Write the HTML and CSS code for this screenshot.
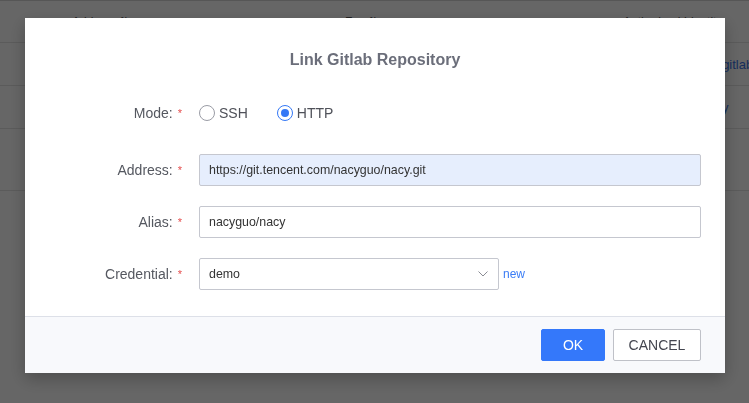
FILE: index.html
```html
<!DOCTYPE html>
<html>
<head>
<meta charset="utf-8">
<link rel="stylesheet" href="styles.css">
</head>
<body>
<div class="page">
  <div class="table">
    <div class="row head">
      <div class="c1">Address ⇅</div>
      <div class="c2">Fav ⇅</div>
      <div class="c3">Authorized Identity</div>
    </div>
    <div class="row">
      <div class="c1"></div>
      <div class="c2"></div>
      <div class="c3 link first">demo/gitlab</div>
    </div>
    <div class="row">
      <div class="c1"></div>
      <div class="c2"></div>
      <div class="c3 link second">nacy</div>
    </div>
    <div class="row tall">
      <div class="c1"></div>
      <div class="c2"></div>
      <div class="c3"></div>
    </div>
  </div>
</div>

<div class="overlay">
  <div class="modal">
    <div class="modal-title">Link Gitlab Repository</div>
    <div class="form">
      <div class="field mode">
        <div class="label">Mode:<span class="req">*</span></div>
        <div class="control radios">
          <label class="radio"><span class="circle"></span>SSH</label>
          <label class="radio"><span class="circle checked"></span>HTTP</label>
        </div>
      </div>
      <div class="field">
        <div class="label">Address:<span class="req">*</span></div>
        <div class="control"><div class="input filled">https://git.tencent.com/nacyguo/nacy.git</div></div>
      </div>
      <div class="field">
        <div class="label">Alias:<span class="req">*</span></div>
        <div class="control"><div class="input">nacyguo/nacy</div></div>
      </div>
      <div class="field">
        <div class="label">Credential:<span class="req">*</span></div>
        <div class="control select-wrap">
          <div class="input select">
            <span>demo</span>
            <svg class="chev" width="10" height="6" viewBox="0 0 10 6"><path d="M0.5 0.5 L5 5 L9.5 0.5" fill="none" stroke="#8a8c94" stroke-width="1"/></svg>
          </div>
          <a class="new">new</a>
        </div>
      </div>
    </div>
    <div class="footer">
      <button class="btn primary">OK</button>
      <button class="btn cancel">CANCEL</button>
    </div>
  </div>
</div>
</body>
</html>
```

FILE: styles.css
```css
* { box-sizing: border-box; }
html, body { margin: 0; padding: 0; }
body {
  font-family: "Liberation Sans", Arial, sans-serif;
  width: 749px;
  height: 403px;
  overflow: hidden;
  background: #fff;
}

.page { border-top: 1px solid #d6d6d6; }
.table { width: 749px; }
.row {
  display: grid;
  grid-template-columns: 345px 278px 126px;
  height: 43px;
  border-bottom: 1px solid #e4e4e4;
  align-items: center;
  font-size: 13px;
  color: #333;
  white-space: nowrap;
  overflow: hidden;
}
.row.head { height: 42px; font-size: 12px; color: #555; }
.row.tall { height: 62px; }
.row > div { overflow: hidden; }
.c1 { padding-left: 72px; }
.link { color: #3a74e8; }
.link.first { padding-left: 63px; }
.link.second { padding-left: 78px; }

.overlay {
  position: fixed;
  inset: 0;
  background: rgba(0, 0, 0, 0.6);
  padding: 18px 0 0 25px;
}

.modal {
  width: 700px;
  background: #fff;
  box-shadow: 0 6px 16px rgba(0, 0, 0, 0.25);
}

.modal-title {
  padding-top: 32px;
  font-size: 16px;
  line-height: 20px;
  font-weight: bold;
  color: #6b6e7a;
  text-align: center;
}

.form {
  padding-top: 27px;
  padding-bottom: 26px;
  display: flex;
  flex-direction: column;
  gap: 20px;
}
.field {
  display: flex;
  align-items: center;
  height: 32px;
}
.field.mode { margin-bottom: 5px; }

.label {
  width: 157px;
  margin-right: 17px;
  text-align: right;
  font-size: 14px;
  color: #555860;
  white-space: nowrap;
}
.req {
  color: #e54d4d;
  font-size: 11px;
  margin-left: 5px;
  position: relative;
  top: -1px;
}

.control { display: flex; align-items: center; }

.radios { gap: 29px; }
.radio {
  display: flex;
  align-items: center;
  gap: 4px;
  font-size: 14px;
  color: #4f5159;
}
.circle {
  width: 16px;
  height: 16px;
  border-radius: 50%;
  border: 1px solid #9a9ca5;
  background: #fff;
  display: inline-flex;
  align-items: center;
  justify-content: center;
}
.circle.checked { border-color: #3478f6; }
.circle.checked::after {
  content: "";
  width: 8px;
  height: 8px;
  border-radius: 50%;
  background: #3478f6;
}

.input {
  width: 502px;
  height: 32px;
  border: 1px solid #c5c7cf;
  border-radius: 2px;
  padding: 0 9px;
  display: flex;
  align-items: center;
  font-size: 12.4px;
  color: #333;
  background: #fff;
}
.input.filled { background: #e6eefd; }
.input.select {
  width: 300px;
  justify-content: space-between;
  padding-right: 10px;
}
.chev { display: block; }
.new {
  margin-left: 4px;
  font-size: 12px;
  color: #3a7cf5;
}

.footer {
  border-top: 1px solid #dde0e8;
  background: #f8f9fc;
  height: 57px;
  padding: 12px 24px 0 0;
  display: flex;
  justify-content: flex-end;
  align-items: flex-start;
  gap: 8px;
}
.btn {
  height: 32px;
  width: 64px;
  padding: 0;
  border-radius: 2px;
  font-family: "Liberation Sans", Arial, sans-serif;
  font-size: 14px;
  border: 1px solid #bfc1c8;
  background: #fff;
  color: #444650;
  cursor: pointer;
}
.btn.cancel { width: 88px; }
.btn.primary {
  background: #3478fa;
  border-color: #3478fa;
  color: #fff;
}
```
